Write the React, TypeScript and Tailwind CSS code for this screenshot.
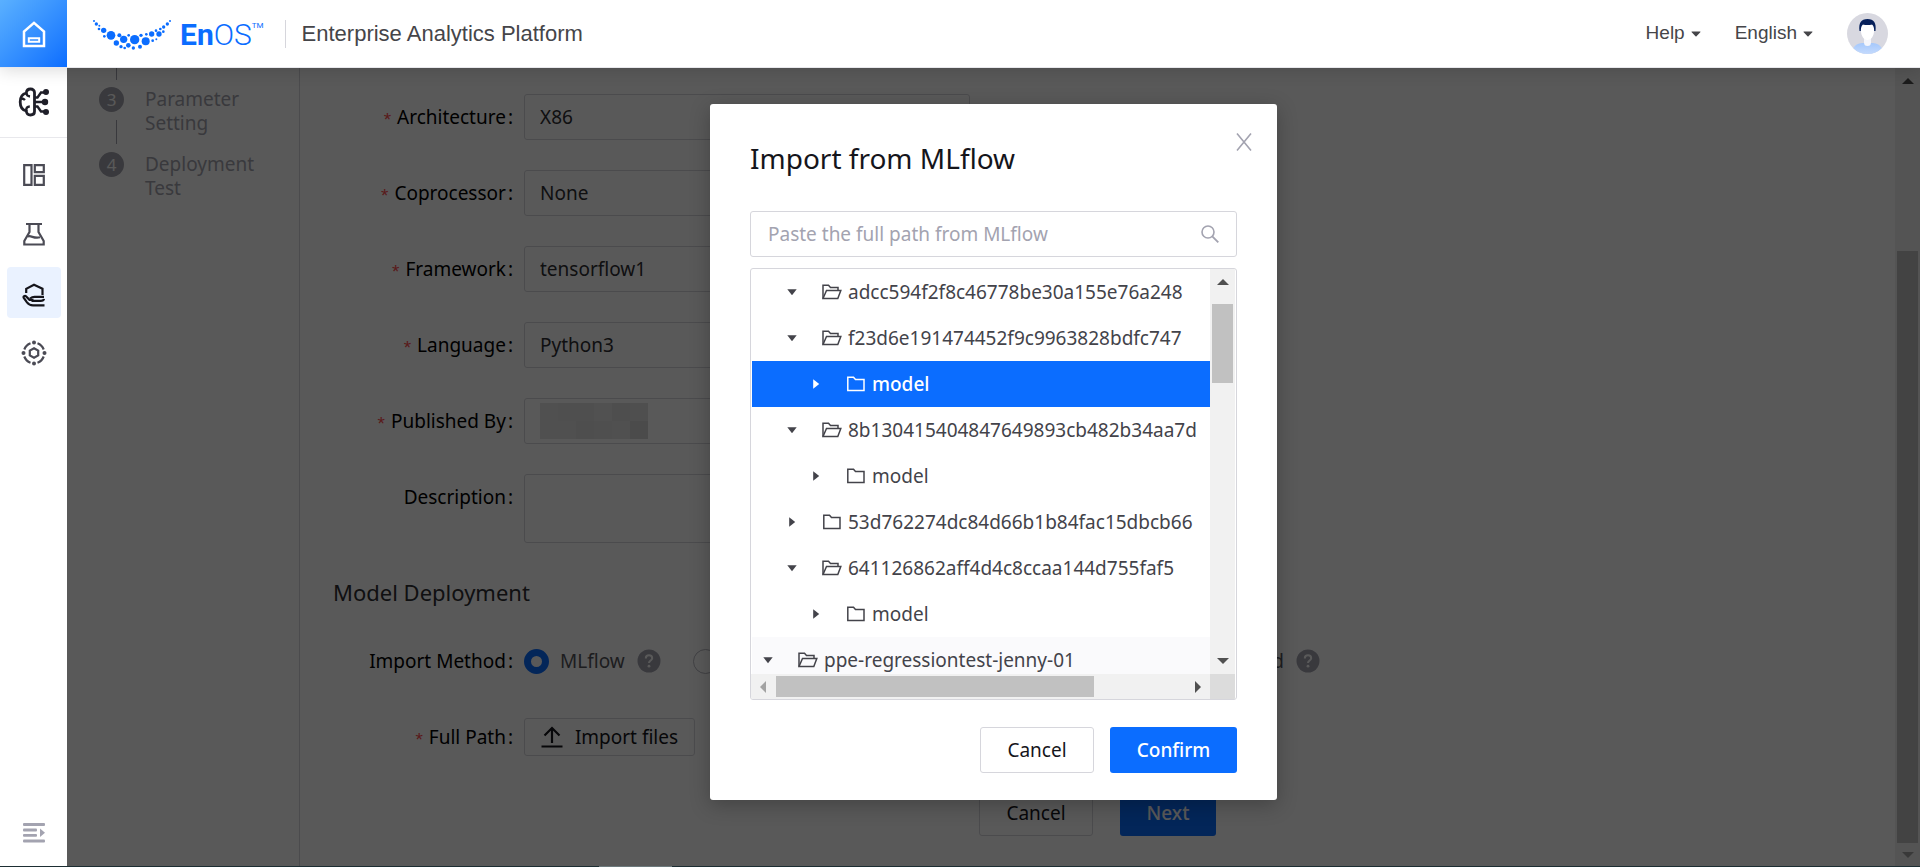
import React from 'react';

type TreeRow = {
  name: string;
  level: 1 | 2 | 3;
  open: boolean;
  selected?: boolean;
};

const treeRows: TreeRow[] = [
  { name: 'adcc594f2f8c46778be30a155e76a248', level: 2, open: true },
  { name: 'f23d6e191474452f9c9963828bdfc747', level: 2, open: true },
  { name: 'model', level: 3, open: false, selected: true },
  { name: '8b130415404847649893cb482b34aa7d', level: 2, open: true },
  { name: 'model', level: 3, open: false },
  { name: '53d762274dc84d66b1b84fac15dbcb66', level: 2, open: false },
  { name: '641126862aff4d4c8ccaa144d755faf5', level: 2, open: true },
  { name: 'model', level: 3, open: false },
  { name: 'ppe-regressiontest-jenny-01', level: 1, open: true },
];

const levelPadding = { 1: 'pl-1', 2: 'pl-7', 3: 'pl-13' };

const textFields = [
  { id: 'architecture', label: 'Architecture', value: 'X86' },
  { id: 'coprocessor', label: 'Coprocessor', value: 'None' },
  { id: 'framework', label: 'Framework', value: 'tensorflow1' },
  { id: 'language', label: 'Language', value: 'Python3' },
];

// x, y, radius of every dot in the brand mark
const logoDots = [
  [12, 33, 3], [19, 42, 5], [28, 47, 3], [27, 57, 4], [41, 61, 8], [43, 79, 4],
  [63, 76, 13], [79, 99, 8], [88, 76, 6], [101, 88, 11], [93, 110, 5], [104, 114, 4],
  [116, 76, 4], [115, 106, 7], [134, 89, 14], [130, 114, 5], [153, 76, 5], [150, 110, 6],
  [167, 94, 12], [169, 73, 4], [185, 72, 8], [188, 92, 4], [199, 88, 3], [198, 62, 4],
  [207, 72, 8], [211, 57, 4], [220, 65, 4], [221, 51, 5], [232, 42, 5], [240, 33, 3],
];

const Triangle: React.FC<{ dir: 'up' | 'down' | 'left' | 'right'; className?: string }> = ({ dir, className }) => {
  const points = {
    up: '0,9 12,9 6,3',
    down: '0,3 12,3 6,9',
    left: '9,0 9,12 3,6',
    right: '3,0 3,12 9,6',
  };
  return (
    <svg className={className} width="12" height="12" viewBox="0 0 12 12" fill="currentColor" aria-hidden="true">
      <polygon points={points[dir]} />
    </svg>
  );
};

const HeaderCaret = () => (
  <svg width="10" height="6" viewBox="0 0 10 6" fill="currentColor" aria-hidden="true">
    <path d="M1 .5h8c.5 0 .6.4.3.7L5.500 5.200c-.3.3-.7.300-1 0L.7 1.200C.4.900.5.500 1 .500z" />
  </svg>
);

const FolderIcon: React.FC<{ open: boolean }> = ({ open }) => (
  <svg width="20" height="18" viewBox="0 0 20 18" fill="none" stroke="currentColor" strokeWidth="1.5" aria-hidden="true">
    {open ? (
      <>
        <path d="M1 15.500V2.200h5.500l2 2.300h7.500v3" />
        <path d="M1 15.500l3.500-8h14.300l-3 8z" />
      </>
    ) : (
      <path d="M1.800 15.500V2.200h5.700l2 2.300h8.500v11z" />
    )}
  </svg>
);

const HelpIcon = () => (
  <svg width="24" height="24" viewBox="0 0 24 24" aria-hidden="true">
    <circle cx="12" cy="12" r="11.500" fill="#a3a3b0" />
    <path d="M8.800 9.500c0-1.900 1.400-3.200 3.200-3.200s3.200 1.200 3.200 2.900c0 2.300-3.200 2.400-3.200 4.800" fill="none" stroke="#fff" strokeWidth="2" />
    <circle cx="12" cy="17.200" r="1.400" fill="#fff" />
  </svg>
);

const Logo = () => (
  <div className="flex items-center pt-0.5 text-[#0b6dff]">
    <svg width="80" height="34" viewBox="6 24 240 102" fill="currentColor" aria-hidden="true">
      {logoDots.map(([x, y, r]) => (
        <circle key={`${x}-${y}`} cx={x} cy={y} r={r} />
      ))}
    </svg>
    <span className="ml-2 font-['Roboto',sans-serif] text-[30px] leading-8">
      <span className="font-bold">En</span>
      <span className="font-light">OS</span>
    </span>
    <span className="self-start font-['Roboto',sans-serif] text-[8px] leading-4">TM</span>
  </div>
);

const Header = () => (
  <header className="relative z-20 flex h-17 shrink-0 items-center border-b border-[#e8e8ec] bg-white font-['Liberation_Sans',Arial,sans-serif] text-[#454549] shadow-[0_2px_16px_rgba(0,0,0,0.15)]">
    <a href="#home" aria-label="Home" className="flex h-full w-[67px] shrink-0 items-center justify-center bg-linear-to-br from-[#5ab0ff] to-[#0b6dff]">
      <svg width="24" height="28" viewBox="0 0 24 28" fill="none" stroke="#fff" strokeWidth="2.500" aria-hidden="true">
        <path d="M2 26V11.500L12 2.800l10 8.700V26z" />
        <path d="M6.800 18.200h10.400v3.600H6.800z" strokeWidth="2" />
      </svg>
    </a>
    <div className="flex grow items-center pl-[25px]">
      <Logo />
      <span className="ml-[21px] h-7 w-px bg-[#d6d6dc]" />
      <h1 className="ml-4 text-[22px] leading-8">Enterprise Analytics Platform</h1>
    </div>
    <div className="flex items-center gap-[34px] pr-8 text-[19px]">
      <button type="button" className="flex items-center gap-[6px]">
        Help <HeaderCaret />
      </button>
      <button type="button" className="flex items-center gap-[6px]">
        English <HeaderCaret />
      </button>
      <svg width="41" height="41" viewBox="0 0 41 41" role="img" aria-label="Account">
        <clipPath id="avatar">
          <circle cx="20.500" cy="20.500" r="20.500" />
        </clipPath>
        <linearGradient id="shirt" x1="0" y1="0" x2="0" y2="1">
          <stop offset="0" stopColor="#a5c8fb" />
          <stop offset="1" stopColor="#c4dafd" />
        </linearGradient>
        <g clipPath="url(#avatar)">
          <rect width="41" height="41" fill="#d8d8e0" />
          <path d="M5 41c0-8 5-10.500 10.500-11h10C31 30.500 36 33 36 41z" fill="url(#shirt)" />
          <path d="M17 24h7v5.500a3.500 3.500 0 0 1-7 0z" fill="#f5f6fb" />
          <path d="M14 12h13v6c0 5-3 9-6.500 9S14 23 14 18z" fill="#fff" />
          <path d="M12.500 18c-1-8 1.500-12 8-12s9 4 8 12h-1.300c0-3-.7-5.500-2.200-6.500-3 .8-6 .8-9 0-1.500 1-2.200 3.500-2.200 6.500z" fill="#06205a" />
        </g>
      </svg>
    </div>
  </header>
);

const BrainIcon = () => (
  <svg width="32" height="30" viewBox="0 0 32 30" fill="none" stroke="#1f1f29" strokeWidth="2.800" aria-hidden="true">
    <path d="M16.500 5.500c0-2-1.500-3.500-4-3.500S8.500 3.500 8.300 6C4 7 2.200 10.500 2.200 15S4 23 8.300 24c.2 2.500 1.700 4 4.200 4s4-1.500 4-3.500z" />
    <path d="M8.300 6c.2 2 1.200 3.200 3.700 3.500M8.300 24c-.5-3 1-4.500 3.500-4.500M3 11.500c2 0 3 .5 4 1.500" strokeWidth="2.400" />
    <path d="M17 10.500h2.500L23 5.500h5M17 15h10M17 19.500h2.500l3.500 5h5" strokeWidth="2.400" />
    <circle cx="28" cy="5" r="3" fill="#1f1f29" stroke="none" />
    <circle cx="27" cy="15" r="3.200" fill="#1f1f29" stroke="none" />
    <circle cx="28" cy="25" r="3" fill="#1f1f29" stroke="none" />
  </svg>
);

const Sidebar = () => (
  <aside className="relative z-10 flex w-[67px] shrink-0 flex-col items-center bg-white text-[#4b4b55]">
    <div className="flex h-[70px] w-full shrink-0 items-center justify-center border-b border-[#e8e8ec] pb-0.5">
      <BrainIcon />
    </div>
    <nav className="mt-[11px] flex flex-col items-center gap-2" aria-label="Analytics">
      <a href="#overview" aria-label="Overview" className="flex h-[51px] w-[54px] items-center justify-center">
        <svg width="24" height="24" viewBox="0 0 24 24" fill="none" stroke="currentColor" strokeWidth="2.200" aria-hidden="true">
          <path d="M2.200 2.200h7.300v19.600H2.200zM12.800 2.200h9v7h-9zM12.800 12.800h9v9h-9z" />
        </svg>
      </a>
      <a href="#lab" aria-label="Lab" className="flex h-[51px] w-[54px] items-center justify-center">
        <svg width="24" height="26" viewBox="0 0 24 26" fill="none" stroke="currentColor" strokeWidth="2.200" aria-hidden="true">
          <path d="M4 3h16M7.500 3v8L2.300 20v3.500h19.400V20L16.500 11V3" />
          <path d="M5.500 15.500c4-1.500 6 2.500 12.500.8" />
        </svg>
      </a>
      <a href="#hub" aria-label="Model Hub" aria-current="page" className="flex h-[51px] w-[54px] items-center justify-center rounded bg-[#eaf2ff] pt-1 text-[#15151b]">
        <svg width="24" height="24" viewBox="0 0 24 24" fill="none" stroke="currentColor" strokeWidth="2.200" aria-hidden="true">
          <path d="M4.200 10V5.800L12 1.800l8.500 4V12" />
          <path d="M22.500 22.300H11c-3 0-4.500-1-6-3l-3.200-4.500c-.8-1.300 1-2.600 2.200-1.500l3.500 3.500h4" />
          <path d="M8 15.500c1.500-1.200 2.500-1.700 4.500-1.700H22M9.500 17.800h9c2 0 3.300-.7 3.500-2" />
        </svg>
      </a>
      <a href="#resources" aria-label="Resources" className="flex h-[51px] w-[54px] items-center justify-center pt-0.5">
        <svg width="26" height="26" viewBox="0 0 26 26" fill="none" stroke="currentColor" strokeWidth="2.200" aria-hidden="true">
          <path d="M16.500 3.300a10.400 10.400 0 0 1 6.200 6.200M22.700 16.500a10.400 10.400 0 0 1-6.200 6.200M9.500 22.700a10.400 10.400 0 0 1-6.200-6.200M3.300 9.500a10.400 10.400 0 0 1 6.200-6.200" />
          <path d="M13 8.200l4.200 2.400v4.800L13 17.800l-4.200-2.400v-4.800z" />
          <g fill="currentColor" stroke="none">
            <circle cx="13" cy="2.500" r="2" />
            <circle cx="23.500" cy="13" r="2" />
            <circle cx="13" cy="23.500" r="2" />
            <circle cx="2.500" cy="13" r="2" />
          </g>
        </svg>
      </a>
    </nav>
    <button type="button" aria-label="Expand menu" className="mt-auto mb-[23px] text-[#a3a3b0]">
      <svg width="22" height="20" viewBox="0 0 22 20" fill="currentColor" aria-hidden="true">
        <rect width="22" height="3" rx="1" />
        <rect y="5.600" width="14" height="2.800" rx="1" />
        <rect y="11" width="14" height="2.800" rx="1" />
        <rect y="16.500" width="22" height="3" rx="1" />
        <path d="M17 5.500l5 4.200-5 4.300z" />
      </svg>
    </button>
  </aside>
);

const Steps = () => (
  <ol className="w-[233px] shrink-0 border-r border-[#d6d6dc] pl-8 text-[#a3a3ae]">
    <li aria-hidden="true" className="ml-[17px] h-3 w-px bg-[#a3a3ae]" />
    <li className="mt-[7px] flex gap-[21px]">
      <div className="flex w-[25px] flex-col">
        <span className="flex size-[25px] items-center justify-center rounded-full bg-[#a3a3ae] text-[17px] text-white">3</span>
        <span className="mt-2 ml-[17px] h-6 w-px bg-[#a3a3ae]" />
      </div>
      <span className="w-30 text-[19px] leading-6">Parameter Setting</span>
    </li>
    <li className="mt-2 flex gap-[21px]">
      <span className="flex size-[25px] items-center justify-center rounded-full bg-[#a3a3ae] text-[17px] text-white">4</span>
      <span className="w-30 text-[19px] leading-6">Deployment Test</span>
    </li>
  </ol>
);

const FieldLabel: React.FC<{ htmlFor?: string; id?: string; required?: boolean; children: React.ReactNode }> = ({
  htmlFor,
  id,
  required,
  children,
}) => (
  <label id={id} htmlFor={htmlFor} className="w-[224px] shrink-0 pr-[11px] text-right leading-[46px] text-black">
    {required && <span className="mr-1 align-[-2px] font-['Liberation_Mono',monospace] leading-none text-[#ff4d4f]">*</span>}
    {children}
    <span className="ml-[2px]">:</span>
  </label>
);

const mosaic = [
  '#e4e4e4', '#e2e2e2', '#e2e2e2', '#e7e7e7', '#dfdfdf', '#e1e1e1',
  '#e6e6e6', '#e4e4e4', '#dedede', '#e2e2e2', '#e4e4e4', '#d6d6d6',
];

const ImportOption: React.FC<{ name: string; checked?: boolean; className?: string }> = ({ name, checked, className }) => (
  <span className={`flex items-center ${className ?? ''}`}>
    <label className="flex items-center gap-[11px] text-[#55555b]">
      <input
        type="radio"
        name="import-method"
        defaultChecked={checked}
        className="size-[25px] appearance-none rounded-full border border-[#b8b8c0] bg-white checked:border-[7px] checked:border-[#0b6dff]"
      />
      {name}
    </label>
    <span className="ml-3">
      <HelpIcon />
    </span>
  </span>
);

const DeployForm = () => (
  <form className="grow pt-[26px] text-[19px]">
    <div className="flex flex-col gap-[30px]">
      {textFields.map((field) => (
        <div key={field.id} className="flex">
          <FieldLabel htmlFor={field.id} required>
            {field.label}
          </FieldLabel>
          <input
            id={field.id}
            readOnly
            value={field.value}
            className="h-[46px] w-[446px] rounded-[3px] border border-[#d6d6dc] bg-white px-[15px] text-[#2e2e33]"
          />
        </div>
      ))}
      <div className="flex">
        <FieldLabel id="published-by" required>
          Published By
        </FieldLabel>
        <div aria-labelledby="published-by" className="flex h-[46px] w-[446px] items-center rounded-[3px] border border-[#d6d6dc] px-[15px]">
          <div className="grid grid-cols-6">
            {mosaic.map((color, index) => (
              <span key={index} className="size-[18px]" style={{ backgroundColor: color }} />
            ))}
          </div>
        </div>
      </div>
      <div className="flex">
        <FieldLabel htmlFor="description">Description</FieldLabel>
        <textarea id="description" className="h-[69px] w-[446px] resize-none rounded-[3px] border border-[#d6d6dc] bg-white px-[15px]" />
      </div>
    </div>

    <h2 className="mt-[33px] ml-[33px] text-[22px] leading-8 text-[#2e2e33]">Model Deployment</h2>

    <div className="mt-[30px] flex">
      <FieldLabel>Import Method</FieldLabel>
      <div className="flex w-[796px] items-center">
        <ImportOption name="MLflow" checked />
        <ImportOption name="Mirror" className="ml-8" />
        <ImportOption name="Upload" className="ml-auto" />
      </div>
    </div>

    <div className="mt-[30px] flex items-center">
      <FieldLabel htmlFor="import-files" required>
        Full Path
      </FieldLabel>
      <button id="import-files" type="button" className="flex h-[38px] w-[171px] items-center justify-center gap-3 rounded-[3px] border border-[#d6d6dc] bg-white text-[#15151b]">
        <svg width="22" height="22" viewBox="0 0 22 22" fill="none" stroke="currentColor" strokeWidth="2.200" aria-hidden="true">
          <path d="M11 17V2.500M3.500 9.500L11 2l7.500 7.500M.500 20.500h21" />
        </svg>
        Import files
      </button>
    </div>

    <div className="mt-[30px] flex justify-center gap-[27px]">
      <button type="button" className="h-[46px] w-[114px] rounded-[3px] border border-[#d6d6dc] bg-white text-[#15151b]">
        Cancel
      </button>
      <button type="button" className="h-[46px] w-24 rounded-[3px] bg-[#0b6dff] font-medium text-white">
        Next
      </button>
    </div>
  </form>
);

const PageScrollbar = () => (
  <div className="flex w-[25px] shrink-0 flex-col items-center bg-[#f1f1f1] pb-[5px]" aria-hidden="true">
    <Triangle dir="up" className="mt-[7px] text-[#505050]" />
    <div className="mt-[164px] mb-[6px] w-[21px] grow bg-[#c1c1c1]" />
    <Triangle dir="down" className="text-[#a3a3a3]" />
  </div>
);

const TreePanel = () => (
  <div className="mt-[11px] grid h-[432px] grid-cols-[minmax(0,1fr)_25px] grid-rows-[minmax(0,1fr)_25px] overflow-hidden rounded-[3px] border border-[#d6d6dc] pr-px">
    <ul role="tree" aria-label="MLflow folders" className="overflow-hidden pl-px">
      {treeRows.map((row, index) => (
        <li
          key={index}
          role="treeitem"
          aria-expanded={row.open}
          aria-selected={!!row.selected}
          className={`flex h-[46px] items-center whitespace-nowrap ${levelPadding[row.level]} ${
            row.selected ? 'bg-[#0b6dff] font-medium text-white' : row.level === 1 ? 'bg-[#fafafc] text-[#43434a]' : 'text-[#43434a]'
          }`}
        >
          <span className="flex w-6 justify-center">
            <svg width="10" height="10" viewBox="0 0 10 10" fill="currentColor" aria-hidden="true">
              <path d={row.open ? 'M.300 2.200h9.400L5 8.200z' : 'M2.200.300v9.400L8.200 5z'} />
            </svg>
          </span>
          <span className="ml-[18px]">
            <FolderIcon open={row.open} />
          </span>
          <span className="ml-[6px]">{row.name}</span>
        </li>
      ))}
    </ul>
    <div className="flex flex-col items-center bg-[#f1f1f1] py-[7px]" aria-hidden="true">
      <Triangle dir="up" className="text-[#505050]" />
      <div className="mt-4 h-[79px] w-[21px] bg-[#c1c1c1]" />
      <Triangle dir="down" className="mt-auto text-[#505050]" />
    </div>
    <div className="flex items-center bg-[#f1f1f1] px-[6px]" aria-hidden="true">
      <Triangle dir="left" className="text-[#a3a3a3]" />
      <div className="ml-[7px] h-[21px] w-[318px] bg-[#c1c1c1]" />
      <Triangle dir="right" className="ml-auto text-[#505050]" />
    </div>
    <div className="bg-[#dcdcdc]" />
  </div>
);

const ImportDialog = () => (
  <div role="dialog" aria-modal="true" aria-labelledby="dialog-title" className="relative w-[567px] rounded-[3px] bg-white px-10 pt-9 pb-[27px] text-[19px] shadow-[0_5px_20px_rgba(0,0,0,0.25)]">
    <button type="button" aria-label="Close" className="absolute top-[29px] right-[25px] text-[#a3a3b0]">
      <svg width="16" height="18" viewBox="0 0 16 18" fill="none" stroke="currentColor" strokeWidth="1.600" aria-hidden="true">
        <path d="M1 .500l14 17M15 .500L1 17.500" />
      </svg>
    </button>
    <h2 id="dialog-title" className="text-[28px] leading-9 text-[#15151b]">
      Import from MLflow
    </h2>
    <div className="mt-[35px] flex h-[46px] items-center rounded-[3px] border border-[#d6d6dc] px-[17px]">
      <input
        type="text"
        aria-label="Full path"
        placeholder="Paste the full path from MLflow"
        className="min-w-0 grow bg-transparent outline-none placeholder:text-[#a3a3b0]"
      />
      <svg width="18" height="18" viewBox="0 0 18 18" fill="none" stroke="#a3a3b0" strokeWidth="1.600" aria-hidden="true">
        <circle cx="7" cy="7" r="6" />
        <path d="M11.300 11.300l6 6" strokeWidth="1.900" />
      </svg>
    </div>
    <TreePanel />
    <div className="mt-[27px] flex justify-end gap-4">
      <button type="button" className="h-[46px] w-[114px] rounded-[3px] border border-[#d6d6dc] bg-white text-[#15151b]">
        Cancel
      </button>
      <button type="button" className="h-[46px] w-[127px] rounded-[3px] bg-[#0b6dff] font-medium text-white">
        Confirm
      </button>
    </div>
  </div>
);

const App: React.FC = () => {
  return (
    <div className="flex h-screen flex-col overflow-hidden bg-white font-['Noto_Sans',sans-serif]">
      <Header />
      <div className="flex min-h-0 grow">
        <Sidebar />
        <main className="relative flex min-w-0 grow overflow-hidden">
          <Steps />
          <DeployForm />
          <PageScrollbar />
          <div className="absolute inset-0 flex items-start justify-center bg-black/65 pt-9">
            <ImportDialog />
          </div>
        </main>
      </div>
      <div className="h-px shrink-0 bg-[#1d2e33] pl-[599px]">
        <div className="h-px w-[73px] bg-[#6d7a7d]" />
      </div>
    </div>
  );
};

export default App;
